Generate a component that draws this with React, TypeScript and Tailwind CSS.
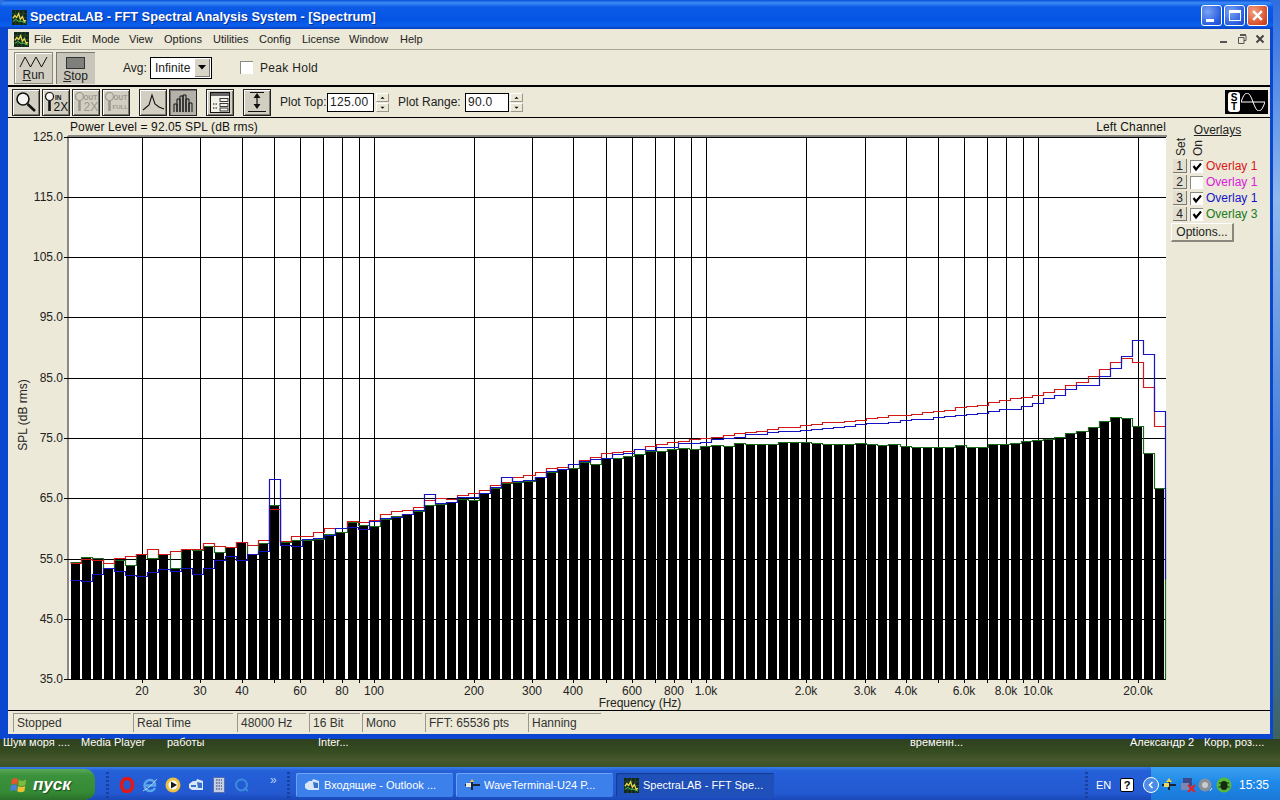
import React from "react";

const FONT = "'Liberation Sans', Arial, sans-serif";

const GREEN = [561.7,556.7,557.7,568,560,564.7,553.7,557.7,553.7,568,549,550,545.7,551.7,547.3,542.3,553.7,543,505.3,542.3,540.3,540.3,539.3,534,532.3,522.3,525,525.7,
519.3,515.7,514,511.3,505.3,504.3,502,498.7,500,493.3,488.3,483,482,481,477.3,471.7,469.3,467.7,462.3,464.3,458.3,458.3,456,454,451,451,449.3,448,449.3,446.3,445.3,
446,443.3,444.3,444.3,444.3,442.3,442.3,442.3,443.3,443.7,443.7,444.3,443.3,444.3,445.3,444.3,445.7,446.7,446.7,446.7,446.7,445.3,446.7,446.7,444.3,444.3,443.3,441.3,440.3,438.7,436.7,
433.3,431.3,426.7,421.3,417.3,418.3,426.3,453.3,488.3];
const RED = [563,558.7,560,562.7,557.7,556.3,553.7,549.3,553.7,551,549.3,549.3,543.3,546.3,547.3,542.3,545.3,540.3,509,541.3,536.3,536.3,532.3,528.3,528.3,521.3,522.3,520.3,
514.3,511.3,510.3,507.3,500,498.3,498.7,494.7,493,490,484.7,481.7,477.3,475.3,472,468.3,466.7,464.3,459.7,456.7,453.3,451.7,450.7,448.7,446.3,444.3,442.3,441.3,439,437.7,436.7,
435,432.7,432.3,430.7,429.3,427.3,427.3,425,424,422.3,421.7,421,420,418.3,417.3,415.3,415.3,414,412.3,410.7,410,407.3,406,404.7,401.7,400.3,398.3,396.7,394.5,392,389.3,
385.3,382.3,376.3,369.3,362.3,358.3,362.3,387.3,426.3];
const BLUE = [580,581,574.3,568,570.7,574.7,576.3,572.3,569,570.7,568.3,574.3,568.3,560,556.3,560,554,550.7,479.3,544.7,546.3,538.7,537.7,535.3,528.3,527.3,529,520.7,
518,516.7,514.3,510,494.3,503.3,501.7,496.7,497.3,492.7,487.3,477.3,481,480,477.3,470.7,469,464,461,459.3,458.3,454,452.7,449,450,447.3,446.7,442.7,442.7,442.3,439.3,
438.3,436.7,434.3,434.3,432,431.3,431.3,429.7,428.7,427.7,426.7,425.7,424.3,423.3,422.7,421.7,420,419.3,419.3,417.3,416.3,415,414,412.7,411.3,409.3,408.7,405.7,402.7,398.3,395.3,
388.7,385,385,376.3,368.3,356.3,340.3,354.3,411];

const barX = (i: number) => Math.round(70 + 11.06 * i);
const stair = (ys: number[], end?: number) => {
  let d = "";
  ys.forEach((y, i) => {
    const yy = Math.round(y) + 0.5;
    const x0 = barX(i) + 0.5;
    const x1 = i === ys.length - 1 ? 1165.5 : barX(i + 1) + 0.5;
    d += (i === 0 ? `M${x0} ${yy}` : `L${x0} ${yy}`) + `L${x1} ${yy}`;
  });
  if (end) d += `L1165.5 ${end}`;
  return d;
};

const HLINES = [137, 197, 257, 317, 378, 438, 498, 559, 619, 679];
const YLABELS = ["125.0", "115.0", "105.0", "95.0", "85.0", "75.0", "65.0", "55.0", "45.0", "35.0"];
const VLINES = [142,200,242,274,300,323,342,359,374,474,532,573,606,632,655,674,691,706,806,865,906,938,964,987,1006,1023,1038,1138];
const XLABELS: [number, string][] = [[142,"20"],[200,"30"],[242,"40"],[300,"60"],[342,"80"],[374,"100"],[474,"200"],[532,"300"],[573,"400"],[632,"600"],[674,"800"],[706,"1.0k"],[806,"2.0k"],[865,"3.0k"],[906,"4.0k"],[964,"6.0k"],[1006,"8.0k"],[1038,"10.0k"],[1138,"20.0k"]];

function Chart() {
  return (
    <svg viewBox="8 118 1162 592" className="block w-[1162px] h-[592px] shrink-0" style={{ fontFamily: FONT }}>
      <text x="70" y="131" fontSize="12" fill="#111" letterSpacing="0.1">Power Level = 92.05 SPL (dB rms)</text>
      <text x="1166" y="131" fontSize="12" fill="#111" textAnchor="end" letterSpacing="0.15">Left Channel</text>
      <rect x="69" y="137" width="1097" height="542" fill="#fff" />
      <path d="M68 136H1167M68 136V680" stroke="#8a8a84" strokeWidth="2" fill="none" />
      <g shapeRendering="crispEdges" stroke="#000" strokeWidth="1">
        {HLINES.map((y) => <line key={y} x1={64} x2={1166} y1={y + 0.5} y2={y + 0.5} />)}
        {VLINES.map((x) => <line key={x} x1={x + 0.5} x2={x + 0.5} y1={137} y2={683} />)}
      </g>
      <g shapeRendering="crispEdges">
        {GREEN.map((y, i) => <rect key={i} x={barX(i) + 1} y={Math.round(y)} width={9} height={679 - Math.round(y)} fill="#000" />)}
      </g>
      <g fill="none" strokeWidth="1.2">
        <path d={stair(GREEN, 679.5)} stroke="#1c6a1c" />
        <path d={stair(RED)} stroke="#d01818" />
        <path d={stair(BLUE, 579.5)} stroke="#1414c4" />
      </g>
      {HLINES.map((y, i) => <text key={y} x="63" y={y + 4} fontSize="12" fill="#222" textAnchor="end">{YLABELS[i]}</text>)}
      {XLABELS.map(([x, t]) => <text key={t} x={x} y="695" fontSize="12" fill="#222" textAnchor="middle">{t}</text>)}
      <text x="640" y="707" fontSize="12" fill="#222" textAnchor="middle">Frequency (Hz)</text>
      <text transform="translate(27 415) rotate(-90)" fontSize="12" fill="#222" textAnchor="middle">SPL (dB rms)</text>
    </svg>
  );
}

function AppIcon() {
  return (
    <svg viewBox="0 0 16 16" className="w-[15px] h-[15px] shrink-0">
      <rect width="16" height="16" fill="#14281a" />
      <path d="M0 4H16M0 8H16M0 12H16M4 0V16M8 0V16M12 0V16" stroke="#2f5a3a" strokeWidth="0.6" />
      <path d="M1 9L3 6L5 8L7 4L9 10L11 7L13 12L15 11" stroke="#e6d84a" strokeWidth="1.4" fill="none" />
      <path d="M1 12L4 10L7 12L10 12L15 14" stroke="#4fd04f" strokeWidth="1" fill="none" />
    </svg>
  );
}

const MENU: [string, string][] = [["File","w-[28px]"],["Edit","w-[30px]"],["Mode","w-[37px]"],["View","w-[35px]"],["Options","w-[49px]"],["Utilities","w-[46px]"],["Config","w-[43px]"],["License","w-[47px]"],["Window","w-[51px]"],["Help","w-[30px]"]];

function TitleBtn({ kind }: { kind: "min" | "max" | "close" }) {
  const bg = kind === "close"
    ? "bg-[radial-gradient(circle_at_30%_30%,#f0a080,#d8502c_70%,#b83818)]"
    : "bg-[radial-gradient(circle_at_30%_30%,#7aa4f4,#2a5ee0_70%,#1c48c8)]";
  return (
    <div className={`w-[21px] h-[21px] rounded-[3px] border border-white flex items-center justify-center ${bg}`}>
      {kind === "min" && <div className="w-[8px] h-[3px] bg-white mt-[9px] -ml-[4px]" />}
      {kind === "max" && <div className="w-[12px] h-[11px] border border-white border-t-[3px]" />}
      {kind === "close" && (
        <svg viewBox="0 0 12 12" className="w-[13px] h-[13px]"><path d="M2 2L10 10M10 2L2 10" stroke="#fff" strokeWidth="2.2" /></svg>
      )}
    </div>
  );
}

function MdiBtn({ kind }: { kind: "min" | "max" | "close" }) {
  return (
    <div className="w-[18px] h-[17px] bg-[#ece9d8] flex items-center justify-center">
      <svg viewBox="0 0 12 12" className="w-[12px] h-[12px]">
        {kind === "min" && <rect x="2" y="8" width="7" height="2" fill="#555" />}
        {kind === "max" && <path d="M4 2.5H10V7.5H8M2.5 4.5H8V10.5H2.5Z M4 1.5H10" stroke="#555" fill="none" />}
        {kind === "close" && <path d="M2.5 2.5L9.5 9.5M9.5 2.5L2.5 9.5" stroke="#444" strokeWidth="2" />}
      </svg>
    </div>
  );
}

function Spinner() {
  return (
    <div className="w-[13px] h-[19px] flex flex-col gap-[1px] shrink-0">
      {["M3 5.5L5.5 3L8 5.5", "M3 3L5.5 5.5L8 3"].map((d) => (
        <div key={d} className="h-[9px] bg-[#ece9d8] border-t border-l border-white border-b border-r border-b-[#9a978a] border-r-[#9a978a] flex items-center justify-center">
          <svg viewBox="0 0 11 8" className="w-[9px] h-[7px]"><path d={d} fill="#000" /></svg>
        </div>
      ))}
    </div>
  );
}

function ToolBtn({ pressed, children, ml }: { pressed?: boolean; children: React.ReactNode; ml?: string }) {
  return (
    <div className={`w-[28px] h-[27px] border border-[#222] shrink-0 flex items-center justify-center ${ml ?? ""} ${pressed ? "bg-[#b4b2a8] shadow-[inset_1px_1px_0_#707070]" : "bg-[#d2cfc2] shadow-[inset_1px_1px_0_#fff,inset_-1px_-1px_0_#7c7a70]"}`}>
      {children}
    </div>
  );
}

function Zoom({ top, bottom, disabled }: { top: string; bottom: string; disabled?: boolean }) {
  const c = disabled ? "#9a988c" : "#111";
  const full = bottom === "FULL";
  return (
    <svg viewBox="0 0 26 25" className="w-[26px] h-[25px]" style={{ fontFamily: FONT }}>
      <circle cx="6.5" cy="6.5" r="4" fill={disabled ? "none" : "#f6f6f2"} stroke={c} strokeWidth="1.2" />
      <path d="M6.5 11V21" stroke={c} strokeWidth="2.6" />
      <text x={top === "IN" ? 12 : 10.5} y="9.5" fontSize="6.5" fontWeight="bold" fill={c}>{top}</text>
      <text x={full ? 9.5 : 10.5} y={full ? 19 : 21} fontSize={full ? 6 : 12} fontWeight={full ? "bold" : "normal"} fill={c}>{bottom}</text>
    </svg>
  );
}

function Check({ on }: { on: boolean }) {
  return (
    <div className="w-[13px] h-[13px] bg-white border-t border-l border-[#8a8a80] shrink-0">
      {on && <svg viewBox="0 0 12 12" className="w-[12px] h-[12px]"><path d="M2.5 5L5 8.5L10 2.5" stroke="#000" strokeWidth="2.2" fill="none" /></svg>}
    </div>
  );
}

const OVERLAYS: [string, boolean, string, string][] = [
  ["1", true, "Overlay 1", "text-[#d81818]"],
  ["2", false, "Overlay 1", "text-[#d820d8]"],
  ["3", true, "Overlay 1", "text-[#1414c8]"],
  ["4", true, "Overlay 3", "text-[#1a7a1a]"],
];

function OverlayPanel() {
  return (
    <div className="w-[100px] h-[592px] shrink-0 flex flex-col pl-[3px] text-[12px] text-[#222]">
      <div className="h-[21px] flex items-end justify-center pr-[8px]"><span className="underline leading-[17px]">Overlays</span></div>
      <div className="h-[16px] flex pl-[3px] gap-[5px] -mt-[7px]">
        <span className="[writing-mode:vertical-rl] rotate-180 leading-[11px] h-[24px]">Set</span>
        <span className="[writing-mode:vertical-rl] rotate-180 leading-[11px] h-[24px] ml-[1px]">On</span>
      </div>
      <div className="mt-[10px] flex flex-col">
        {OVERLAYS.map(([n, on, label, color]) => (
          <div key={n} className="h-[16px] flex items-center">
            <div className="w-[14px] h-[14px] bg-[#e2dfd0] border-r border-b border-[#7c7a70] border-t-white border-l-white flex items-center justify-center text-[12px] leading-none shrink-0">{n}</div>
            <div className="ml-[3px]"><Check on={on} /></div>
            <span className={`ml-[3px] whitespace-nowrap ${color}`}>{label}</span>
          </div>
        ))}
      </div>
      <div className="mt-[1px] -ml-[2px] w-[63px] h-[19px] bg-[#ece9d8] border-t border-l border-white border-r-2 border-b-2 border-r-[#8a887c] border-b-[#8a887c] flex items-center justify-center leading-none">Options...</div>
    </div>
  );
}

const STATUS: [string, string][] = [["Stopped","w-[118px]"],["Real Time","w-[100px]"],["48000 Hz","w-[69px]"],["16 Bit","w-[51px]"],["Mono","w-[60px]"],["FFT: 65536 pts","w-[101px]"],["Hanning","w-[73px]"]];
const STATUS_GAP = ["mr-[2px]","mr-[4px]","mr-[3px]","mr-[2px]","mr-[3px]","mr-[2px]",""];

function Flag() {
  return (
    <svg viewBox="0 0 20 20" className="w-[18px] h-[18px] shrink-0">
      <path d="M2 4Q6 1 9 4L8 10Q5 7 1 10Z" fill="#e2582c" />
      <path d="M10 4Q13 7 18 4L17 10Q13 12 9 10Z" fill="#7dbb3c" />
      <path d="M1 11Q5 8 8 11L7 17Q4 14 0 17Z" fill="#4a80d8" />
      <path d="M9 11Q13 13 17 11L16 17Q12 19 8 17Z" fill="#f0c030" />
    </svg>
  );
}

function Quick() {
  return (
    <div className="flex items-center gap-[7px] ml-[10px] w-[168px] shrink-0">
      <svg viewBox="0 0 16 16" className="w-[16px] h-[16px] shrink-0"><ellipse cx="8" cy="8" rx="5.5" ry="6.5" fill="none" stroke="#e01818" strokeWidth="3.6" /></svg>
      <svg viewBox="0 0 16 16" className="w-[16px] h-[16px] shrink-0"><path d="M3 8.5H13C13 4.5 10.5 3 8 3C5 3 2.5 5.5 2.5 8.5C2.5 11.5 5 14 8 14C10 14 12 13 13 11" fill="none" stroke="#5aa8ec" strokeWidth="2.4" /><path d="M1 14Q8 11 15 2" stroke="#d0e8fa" strokeWidth="0.8" fill="none" /></svg>
      <svg viewBox="0 0 16 16" className="w-[16px] h-[16px] shrink-0"><circle cx="8" cy="8" r="7.5" fill="#eec040" /><circle cx="8" cy="8" r="4.5" fill="#fff" /><path d="M6 4.5L12 8L6 11.5Z" fill="#1a1a1a" /></svg>
      <svg viewBox="0 0 16 16" className="w-[16px] h-[16px] shrink-0"><path d="M1 7L5 4H8L9 2L15 4V13H4L1 11Z" fill="#d8e6fa" /><path d="M9 5L14 6V11L10 11Z" fill="#3a70c8" /><path d="M3 9H8" stroke="#3a70c8" strokeWidth="2" /></svg>
      <svg viewBox="0 0 16 16" className="w-[16px] h-[16px] shrink-0"><rect x="2.5" y="0.5" width="11" height="15" fill="#c4cde4" stroke="#5a6ea8" /><path d="M5 3H11M5 6H11M5 9H11M5 12H11" stroke="#5a6a90" strokeWidth="1.4" strokeDasharray="1.5 1" /></svg>
      <svg viewBox="0 0 16 16" className="w-[16px] h-[16px] shrink-0"><circle cx="7.5" cy="8" r="5.5" fill="none" stroke="#3c8ce0" strokeWidth="2" /><path d="M10 11L14 14" stroke="#3c8ce0" strokeWidth="2" /></svg>
      <span className="text-[#b8d0f4] text-[12px] leading-none -mt-[10px] ml-[13px]">»</span>
    </div>
  );
}

function Grip({ ml }: { ml: string }) {
  return <div className={`w-[3px] h-[26px] shrink-0 ${ml} bg-[repeating-linear-gradient(180deg,#1a3f9c_0,#1a3f9c_2px,transparent_2px,transparent_4px)]`} />;
}

function TaskBtn({ active, icon, label, w }: { active?: boolean; icon: React.ReactNode; label: string; w: string }) {
  return (
    <div className={`${w} h-[24px] rounded-[2px] flex items-center pl-[8px] gap-[4px] text-white text-[11px] whitespace-nowrap shrink-0 ${active ? "bg-[#1f4fb8] shadow-[inset_1px_1px_1px_#143a90]" : "bg-[#3c80ec] shadow-[inset_1px_1px_0_#6ea2f2]"}`}>
      {icon}
      <span>{label}</span>
    </div>
  );
}

export default function App() {
  return (
    <div className="w-[1280px] h-[800px] overflow-hidden flex flex-col bg-[linear-gradient(180deg,#2f6ee0_0%,#8fb8ec_25%,#4a80d8_55%,#3d6a8a_85%,#3f5a2a_100%)]" style={{ fontFamily: FONT }}>
      <div className="flex h-[739px] shrink-0">
        <div className="w-[1273px] h-[739px] shrink-0 rounded-t-[7px] bg-[#0a46d0] flex flex-col">
          {/* Title bar */}
          <div className="h-[29px] shrink-0 rounded-t-[7px] flex items-center pl-[12px] pr-[5px] pt-[5px] bg-[linear-gradient(180deg,#0a50d8_0%,#3a8cf4_10%,#0c5ae6_24%,#0554e4_70%,#0a60ec_88%,#0a3ec0_100%)]">
            <AppIcon />
            <span className="ml-[3px] text-white font-bold text-[12.8px] leading-none whitespace-nowrap [text-shadow:1px_1px_0_#0a2f90]">SpectraLAB - FFT Spectral Analysis System - [Spectrum]</span>
            <div className="ml-auto flex gap-[2px] -mt-[3px]">
              <TitleBtn kind="min" /><TitleBtn kind="max" /><TitleBtn kind="close" />
            </div>
          </div>
          <div className="ml-[8px] w-[1262px] h-[705px] bg-[#ece9d8] flex flex-col text-[#222]">
            {/* Menu */}
            <div className="h-[21px] shrink-0 flex items-center pl-[6px] pr-[1px] text-[11px] border-b border-[#a8a69a]">
              <AppIcon />
              <div className="flex ml-[5px]">
                {MENU.map(([m, w]) => <span key={m} className={`${w} shrink-0`}>{m}</span>)}
              </div>
              <div className="ml-auto flex"><MdiBtn kind="min" /><MdiBtn kind="max" /><MdiBtn kind="close" /></div>
            </div>
            {/* Toolbar 1 */}
            <div className="h-[37px] shrink-0 flex items-center pl-[6px] border-b-2 border-black text-[12px]">
              <div className="w-[39px] h-[32px] bg-[#d2cfc2] border border-[#8a887c] shadow-[inset_1px_1px_0_#fff] flex flex-col items-center shrink-0">
                <svg viewBox="0 0 30 14" className="w-[30px] h-[14px] mt-[2px]"><path d="M1 12L6 2L11.5 12L17 2L22.5 12L28 2" stroke="#111" fill="none" /></svg>
                <span className="leading-[13px]"><span className="underline">R</span>un</span>
              </div>
              <div className="ml-[3px] w-[39px] h-[32px] bg-[#c8c6ba] shadow-[inset_1px_1px_0_#7a786c] flex flex-col items-center shrink-0">
                <div className="w-[19px] h-[12px] bg-[#7f7f7c] border border-[#333] mt-[5px]" />
                <span className="leading-[13px] mt-[1px]"><span className="underline">S</span>top</span>
              </div>
              <span className="ml-[28px] w-[27px] shrink-0">Avg:</span>
              <div className="w-[62px] h-[22px] mt-[1px] bg-white border border-black flex items-center shrink-0 pl-[4px]">
                <span>Infinite</span>
                <div className="ml-auto mr-[1px] w-[15px] h-[18px] bg-[#d8d5c6] border-r border-b border-[#7c7a70] flex items-center justify-center">
                  <svg viewBox="0 0 8 5" className="w-[8px] h-[5px]"><path d="M0 0H8L4 4.5Z" fill="#000" /></svg>
                </div>
              </div>
              <div className="ml-[28px] w-[13px] h-[13px] bg-white border-t border-l border-[#8a8a80] shrink-0" />
              <span className="ml-[7px] tracking-[0.3px]">Peak Hold</span>
            </div>
            {/* Toolbar 2 */}
            <div className="h-[31px] shrink-0 flex items-center pl-[4px] pr-[2px] border-b border-black text-[12px]">
              <div className="flex gap-[2px]">
                <ToolBtn>
                  <svg viewBox="0 0 26 25" className="w-[26px] h-[25px]"><circle cx="10" cy="9" r="6" fill="#f4f4f0" stroke="#111" strokeWidth="1.6" /><path d="M14.5 14L22 21" stroke="#111" strokeWidth="2.6" /></svg>
                </ToolBtn>
                <ToolBtn><Zoom top="IN" bottom="2X" /></ToolBtn>
                <ToolBtn><Zoom top="OUT" bottom="2X" disabled /></ToolBtn>
                <ToolBtn><Zoom top="OUT" bottom="FULL" disabled /></ToolBtn>
              </div>
              <ToolBtn ml="ml-[9px]">
                <svg viewBox="0 0 26 25" className="w-[26px] h-[25px]"><path d="M3 20L9 15L12 5L15 14L19 17L24 19" stroke="#111" fill="none" strokeWidth="1.1" /></svg>
              </ToolBtn>
              <ToolBtn pressed ml="ml-[2px]">
                <svg viewBox="0 0 26 25" className="w-[26px] h-[25px]"><path d="M4 22V14H7V22M7 22V9H10V22M10 22V6H13V22M13 22V5H16V22M16 22V9H19V22M19 22V13H22V22" stroke="#111" fill="none" strokeWidth="1" /></svg>
              </ToolBtn>
              <ToolBtn ml="ml-[9px]">
                <svg viewBox="0 0 26 25" className="w-[26px] h-[25px]"><rect x="3.5" y="2.5" width="19" height="20" fill="#f2f2ea" stroke="#111" /><rect x="4" y="3" width="18" height="3" fill="#666" /><rect x="13" y="8.5" width="8" height="3" fill="#f2f2ea" stroke="#111" strokeWidth="0.8" /><rect x="13" y="13.5" width="8" height="3" fill="#f2f2ea" stroke="#111" strokeWidth="0.8" /><rect x="13" y="18" width="8" height="3" fill="#f2f2ea" stroke="#111" strokeWidth="0.8" /><path d="M6 14H10M6 18H10" stroke="#111" strokeDasharray="1.5 1" /></svg>
              </ToolBtn>
              <ToolBtn ml="ml-[9px]">
                <svg viewBox="0 0 26 25" className="w-[26px] h-[25px]"><path d="M6 2.5H20M4 21.5H22M13 4V18" stroke="#111" strokeWidth="1.2" /><path d="M13 3L9.5 8H16.5ZM13 19L9.5 14H16.5Z" fill="#111" /></svg>
              </ToolBtn>
              <span className="ml-[9px] w-[47px] shrink-0 whitespace-nowrap">Plot Top:</span>
              <div className="w-[47px] h-[19px] bg-white border border-black flex items-center pl-[2px] shrink-0 tracking-[0.3px]">125.00</div>
              <div className="ml-[2px]"><Spinner /></div>
              <span className="ml-[9px] w-[67px] shrink-0 whitespace-nowrap">Plot Range:</span>
              <div className="w-[44px] h-[19px] bg-white border border-black flex items-center pl-[2px] shrink-0 tracking-[0.3px]">90.0</div>
              <div className="ml-[1px]"><Spinner /></div>
              <div className="ml-auto w-[43px] h-[24px] bg-black flex items-center shrink-0 pl-[3px]">
                <div className="w-[12px] h-[20px] bg-white rounded-[3px] flex flex-col items-center justify-center text-black font-bold text-[10px] leading-[9px]">
                  <span>S</span><span>T</span>
                </div>
                <svg viewBox="0 0 24 18" className="w-[24px] h-[18px] ml-[1px]"><path d="M0 9Q3 0 6 0Q9 0 12 9Q15 18 18 18Q21 18 24 9M0 9H24" stroke="#fff" fill="none" strokeWidth="1" /></svg>
              </div>
            </div>
            {/* Plot */}
            <div className="h-[592px] shrink-0 flex">
              <Chart />
              <OverlayPanel />
            </div>
            {/* Status */}
            <div className="h-[24px] shrink-0 border-t border-black flex items-center pl-[5px] text-[12px] text-[#333]">
              {STATUS.map(([s, w], i) => (
                <div key={s} className={`${w} ${STATUS_GAP[i]} h-[19px] shrink-0 border-t border-l border-[#9a988c] pl-[3px] flex items-center whitespace-nowrap`}>{s}</div>
              ))}
            </div>
          </div>
        </div>
      </div>
      {/* Desktop strip */}
      <div className="relative h-[28px] shrink-0 bg-[linear-gradient(180deg,#2f4020_0%,#344a20_40%,#46582c_75%,#3a5226_100%)] text-white text-[11px] leading-none">
        {([[3,"Шум моря ...."],[81,"Media Player"],[167,"работы"],[318,"Inter..."],[910,"временн..."],[1130,"Александр 2"],[1204,"Корр, роз...."]] as [number,string][]).map(([x, t]) => (
          <span key={t} className="absolute top-[-2px] whitespace-nowrap" style={{ left: x }}>{t}</span>
        ))}
      </div>
      {/* Taskbar */}
      <div className="h-[33px] shrink-0 flex items-center pt-[3px] bg-[linear-gradient(180deg,#3a7ce8_0%,#2460d8_12%,#2358d0_80%,#1a48b8_100%)]">
        <div className="w-[95px] h-[31px] self-end rounded-r-[10px] flex items-center pl-[10px] gap-[5px] shrink-0 bg-[linear-gradient(180deg,#5aa85a_0%,#3c923c_20%,#358a35_75%,#2a6e2a_100%)]">
          <Flag />
          <span className="text-white font-bold italic text-[17px] leading-none [text-shadow:1px_1px_1px_#1a4a1a]">пуск</span>
        </div>
        <Grip ml="ml-[11px]" />
        <Quick />
        <Grip ml="ml-[0px]" />
        <div className="ml-[6px] flex gap-[3px] items-center">
          <TaskBtn w="w-[157px]" label="Входящие - Outlook ..." icon={<svg viewBox="0 0 16 16" className="w-[16px] h-[16px] shrink-0"><path d="M1 7L5 4H8L9 2L15 4V13H4L1 11Z" fill="#d8e6fa" /><path d="M9 5L14 6V11L10 11Z" fill="#3a70c8" /></svg>} />
          <TaskBtn w="w-[157px]" label="WaveTerminal-U24 P..." icon={<svg viewBox="0 0 16 16" className="w-[16px] h-[16px] shrink-0"><path d="M1 8H13M8 3V13M13 8L16 8" stroke="#16243c" strokeWidth="2" /><path d="M8 2L6 5H10Z" fill="#f0d040" /><rect x="2" y="6" width="5" height="4" fill="#e8e8d8" /></svg>} />
          <TaskBtn active w="w-[158px]" label="SpectraLAB - FFT Spe..." icon={<AppIcon />} />
        </div>
        <Grip ml="ml-[311px]" />
        <span className="ml-[8px] w-[14px] text-white text-[11px]">EN</span>
        <div className="ml-[10px] w-[14px] h-[14px] bg-white border border-black rounded-[2px] flex items-center justify-center text-black font-bold text-[11px] leading-none shrink-0">?</div>
        <div className="ml-[9px] relative z-10 w-[16px] h-[16px] rounded-full bg-[#4a8ce8] border border-white flex items-center justify-center shrink-0">
          <svg viewBox="0 0 8 8" className="w-[8px] h-[8px]"><path d="M5.5 1L2.5 4L5.5 7" stroke="#fff" strokeWidth="1.6" fill="none" /></svg>
        </div>
        <div className="-ml-[8px] pl-[10px] pt-[3px] h-[33px] self-end flex-1 flex items-center bg-[linear-gradient(180deg,#3aa0f0_0%,#1e88e8_50%,#1a78d8_100%)]">
          <svg viewBox="0 0 16 16" className="w-[16px] h-[16px] shrink-0"><path d="M1 8H15M8 3V13" stroke="#16243c" strokeWidth="2" /><path d="M8 1L5 5H11Z" fill="#f0d040" /><rect x="3" y="6" width="5" height="4" fill="#e8d860" /></svg>
          <svg viewBox="0 0 16 16" className="w-[16px] h-[16px] ml-[3px] shrink-0"><rect x="3" y="1" width="9" height="8" fill="#3a4a8a" /><rect x="1" y="6" width="8" height="7" fill="#7a88b8" /><path d="M8 8L15 15M15 8L8 15" stroke="#e82020" strokeWidth="2" /></svg>
          <svg viewBox="0 0 16 16" className="w-[16px] h-[16px] ml-[1px] shrink-0"><circle cx="8" cy="8" r="6.5" fill="#8a9098" /><circle cx="8" cy="8" r="3" fill="#c8ccd0" /><path d="M13 14L15 11" stroke="#d8e4f4" /></svg>
          <svg viewBox="0 0 16 16" className="w-[16px] h-[16px] ml-[3px] shrink-0"><circle cx="8" cy="8" r="7.5" fill="#58b838" /><ellipse cx="8" cy="8.5" rx="3.5" ry="4.5" fill="#142a10" /><path d="M3 6L13 6M2.5 10H13.5" stroke="#142a10" /></svg>
          <span className="ml-[7px] text-white text-[12px] whitespace-nowrap">15:35</span>
        </div>
      </div>
    </div>
  );
}
